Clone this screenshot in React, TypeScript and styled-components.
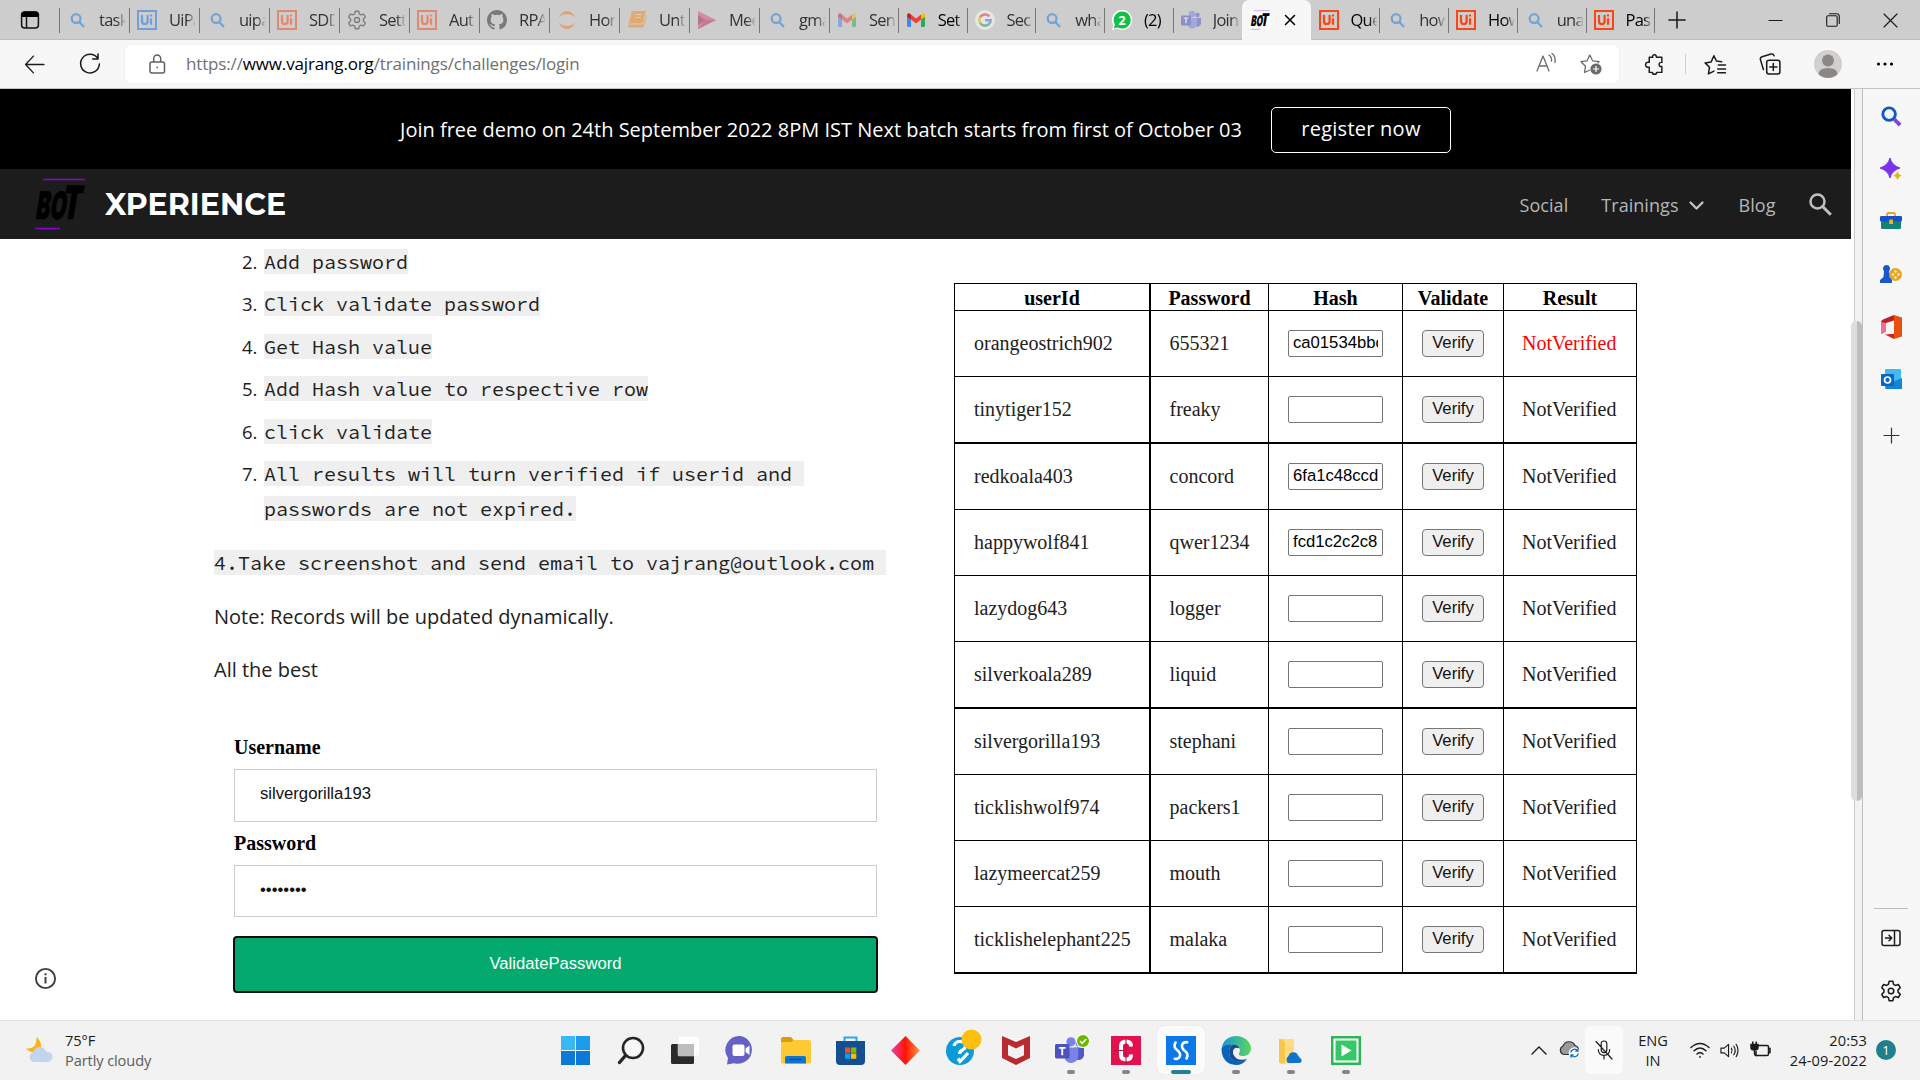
import React from 'react';
import styled, { createGlobalStyle } from 'styled-components';

const ui = "'Segoe UI', 'Open Sans', 'Noto Sans', sans-serif";
const body = "'Open Sans', 'Noto Sans', sans-serif";
const serif = "'Liberation Serif', 'Times New Roman', serif";
const sans = "'Liberation Sans', Arial, sans-serif";

const GlobalStyle = createGlobalStyle`
  *, *::before, *::after { box-sizing: border-box; }
  body { margin: 0; background: #fff; overflow: hidden; }
  svg { display: block; flex: none; overflow: visible; }
  p, ol { margin: 0; padding: 0; }
`;

const Screen = styled.div`
  width: 1920px;
  height: 1080px;
  display: flex;
  flex-direction: column;
  overflow: hidden;
  background: #fff;
`;

/* ---------- tab strip ---------- */

const TabStrip = styled.header`
  height: 40px;
  display: flex;
  background: #cdcdcd;
  box-shadow: inset 0 -1px 0 #bdbdbd;
  font: 400 16.5px/40px ${ui};
`;
const TabActions = styled.div`
  width: 59px;
  display: flex;
  align-items: center;
  padding-left: 20px;
`;
const Tab = styled.div<{ $wide?: boolean; $sep?: boolean }>`
  width: ${p => (p.$wide ? 70 : 68.75)}px;
  height: 40px;
  display: flex;
  align-items: center;
  padding-left: 8px;
  background: ${p =>
    p.$sep ? 'linear-gradient(#777, #777) 0 8px / 1.3px 25px no-repeat' : 'none'};
`;
const TabIcon = styled.span<{ $dim?: boolean }>`
  width: 20px;
  height: 20px;
  flex: none;
  margin-right: 12px;
  opacity: ${p => (p.$dim ? 0.5 : 1)};
`;
const TabTitle = styled.span<{ $dim?: boolean }>`
  width: 26px;
  overflow: hidden;
  white-space: pre;
  letter-spacing: -0.75px;
  color: ${p => (p.$dim ? '#333' : '#000')};
  mask-image: linear-gradient(90deg, #000 68%, transparent 104%);
`;
const ActiveTab = styled.div`
  width: 69px;
  height: 40px;
  display: flex;
  align-items: center;
  gap: 14px;
  padding-left: 8px;
  border-radius: 7px 7px 0 0;
  background: #f7f7f7;
`;
const LastSeparator = styled.span`
  width: 1px;
  height: 25px;
  margin-top: 8px;
  background: #777;
`;
const NewTab = styled.span`
  width: 43px;
  display: flex;
  align-items: center;
  justify-content: center;
`;
const WindowControls = styled.div`
  width: 173px;
  margin-left: auto;
  display: flex;
  > * { width: 57.6px; display: flex; align-items: center; justify-content: center; }
`;

/* ---------- toolbar ---------- */

const Toolbar = styled.div`
  height: 49px;
  display: flex;
  align-items: center;
  padding: 0 0 0 24px;
  background: #f7f7f7;
  border-bottom: 1px solid #c4c4c4;
`;
const NavButton = styled.span<{ $w: number }>`
  width: ${p => p.$w}px;
  display: flex;
  align-items: center;
`;
const AddressBar = styled.div`
  width: 1494px;
  height: 38px;
  display: flex;
  align-items: center;
  padding: 0 17px 0 22px;
  border-radius: 6px;
  background: #fff;
  box-shadow: 0 0 3px #e6e6e6;
`;
const Url = styled.span`
  margin-left: 19px;
  flex: 1;
  font: 400 17px/38px ${ui};
  letter-spacing: -0.15px;
  color: #707070;
  b { font-weight: 400; color: #000; }
`;
const AddressIcons = styled.span`
  display: flex;
  gap: 24px;
`;
const ToolbarIcons = styled.div`
  flex: 1;
  display: grid;
  grid-template-columns: 46px 17px 41px 70px 46px 68px;
  align-items: center;
  justify-items: center;
  padding-left: 12px;
`;
const ToolbarDivider = styled.span`
  width: 1.5px;
  height: 20px;
  background: #ccc;
`;

/* ---------- page ---------- */

const Middle = styled.div`
  height: 931px;
  display: flex;
`;
const Page = styled.main`
  position: relative;
  width: 1851px;
  height: 931px;
  overflow: hidden;
  background: #fff;
`;
const Banner = styled.div`
  height: 80px;
  display: flex;
  justify-content: center;
  align-items: center;
  gap: 29px;
  color: #fff;
  background: #000;
  font: 400 20px/27px ${body};
`;
const RegisterButton = styled.span`
  width: 180px;
  height: 46px;
  margin-top: 1px;
  display: flex;
  align-items: center;
  justify-content: center;
  padding-bottom: 2px;
  border: 1px solid #fff;
  border-radius: 5px;
  letter-spacing: 0.25px;
`;
const SiteHeader = styled.div`
  height: 70px;
  display: flex;
  align-items: center;
  padding: 0 19px 0 34px;
  background: #1c1c1c;
`;
const SiteName = styled.span`
  margin-left: 20px;
  padding-top: 1px;
  flex: 1;
  color: #fff;
  font: 700 30px/40px Montserrat, Inter, sans-serif;
  letter-spacing: 0.05px;
`;
const SiteNav = styled.nav`
  display: flex;
  align-items: center;
  font: 400 18px/25px ${body};
  color: #b6b6b6;
`;
const NavItem = styled.span<{ $gap: number }>`
  display: flex;
  align-items: center;
  gap: 10px;
  margin-right: ${p => p.$gap}px;
  padding-top: 3px;
  letter-spacing: 0.05px;
`;
const Content = styled.div`
  display: flex;
`;
const Instructions = styled.section`
  width: 740px;
  margin-left: 214px;
  padding-top: 6px;
  font: 400 20px/34.9px ${body};
  color: #212121;
`;
const Steps = styled.ol`
  list-style: none;
`;
const Step = styled.li`
  display: flex;
  padding-left: 28px;
  margin-bottom: 7.5px;
`;
const StepNumber = styled.span`
  width: 22px;
  font-size: 18.5px;
`;
const Code = styled.code`
  font: 400 20px 'Source Code Pro', 'Liberation Mono', monospace;
  line-height: 1;
  background: #efefef;
`;
const Paragraph = styled.p<{ $top: number }>`
  margin-top: ${p => p.$top}px;
  white-space: nowrap;
`;
const Form = styled.form`
  width: 645px;
  margin: 48px 0 0 19px;
  display: flex;
  flex-direction: column;
`;
const Label = styled.label<{ $top?: number }>`
  margin: ${p => p.$top || 0}px 0 10px 1px;
  font: 700 20px/23px ${serif};
  color: #000;
`;
const Field = styled.div<{ $h: number }>`
  height: ${p => p.$h}px;
  margin: 0 1px;
  display: flex;
  align-items: center;
  padding: 0 25px 3px;
  border: 1px solid #ccc;
  font: 400 16.67px/20px ${sans};
  color: #111;
`;
const Submit = styled.div`
  height: 57px;
  margin-top: 19px;
  display: flex;
  align-items: center;
  justify-content: center;
  padding-bottom: 1px;
  border: 2px solid #101010;
  border-radius: 4px;
  background: #04aa6d;
  color: #fff;
  font: 400 16.67px/20px ${sans};
`;

/* ---------- credentials table ---------- */

const Table = styled.table`
  width: 683px;
  height: 691px;
  margin-top: 44px;
  table-layout: fixed;
  border-collapse: separate;
  border-spacing: 0;
  border-top: 1px solid #000;
  border-left: 1px solid #000;
  font: 400 20px/23px ${serif};
  color: #212121;
`;
const Col = styled.col<{ $w: number }>`
  width: ${p => p.$w}px;
`;
const HeadCell = styled.th<{ $thick?: boolean }>`
  height: 27px;
  padding: 2px 0 0;
  color: #000;
  border: solid #000;
  border-width: 0 ${p => (p.$thick ? 2 : 1)}px 1px 0;
`;
const Cell = styled.td<{ $thick?: boolean; $bottom?: boolean; $red?: boolean; $pad?: number }>`
  height: ${p => (p.$bottom ? 67 : 66)}px;
  padding: 0 0 0 ${p => p.$pad ?? 19}px;
  border: solid #000;
  border-width: 0 ${p => (p.$thick ? 2 : 1)}px ${p => (p.$bottom ? 2 : 1)}px 0;
  color: ${p => (p.$red ? '#f00' : 'inherit')};
`;
const HashBox = styled.div`
  width: 95px;
  height: 27px;
  padding: 0 4px;
  border: 1px solid #767676;
  border-radius: 2px;
  font: 400 16.67px/24px ${sans};
  color: #000;
  > span { display: block; overflow: hidden; }
`;
const VerifyButton = styled.div`
  width: 62px;
  height: 27px;
  text-align: center;
  border: 1px solid #767676;
  border-radius: 4px;
  background: #efefef;
  font: 400 16.67px/24px ${sans};
  color: #111;
`;
const InfoButton = styled.span`
  position: absolute;
  left: 34px;
  bottom: 30px;
`;

/* ---------- scrollbar and sidebar ---------- */

const Scrollbar = styled.div`
  width: 12px;
  padding-top: 232px;
  background: linear-gradient(90deg, #fff 3px, #ccc 3px, #ccc 4px, #f3f3f3 4px, #f3f3f3 11px, #bdbdbd 11px);
`;
const Thumb = styled.div`
  width: 11px;
  height: 480px;
  border-radius: 5px;
  background: linear-gradient(90deg, #dedede 6px, #bdbdbd 6px);
`;
const Sidebar = styled.aside`
  width: 57px;
  display: flex;
  flex-direction: column;
  align-items: center;
  padding: 1px 1px 0 0;
  background: #f7f7f7;
`;
const SideItem = styled.span<{ $h?: number }>`
  height: ${p => p.$h || 52.6}px;
  display: flex;
  align-items: center;
`;
const SideDivider = styled.span`
  width: 34px;
  height: 1px;
  margin: auto 0 3px;
  background: #bdbdbd;
`;

/* ---------- taskbar ---------- */

const Taskbar = styled.footer`
  height: 60px;
  display: flex;
  background: #f2f2f2;
  border-top: 1px solid #e2e2e2;
  font: 400 14.6px/20px ${ui};
  color: #1a1a1a;
`;
const Weather = styled.div`
  width: 548px;
  display: flex;
  align-items: center;
  gap: 12px;
  padding: 0 0 1px 26px;
`;
const Lines = styled.div<{ $align?: string }>`
  text-align: ${p => p.$align || 'left'};
  letter-spacing: ${p => (p.$align === 'right' ? 0.1 : -0.1)}px;
  white-space: nowrap;
  small { display: block; font-size: inherit; color: #5c5c5c; }
`;
const Apps = styled.div`
  display: flex;
`;
const AppSlot = styled.div`
  width: 55px;
  display: flex;
  justify-content: center;
  padding-top: 5px;
`;
const AppTile = styled.div<{ $active?: boolean }>`
  width: 48px;
  height: 48px;
  display: flex;
  flex-direction: column;
  align-items: center;
  padding-top: 9.5px;
  border-radius: 6px;
  background: ${p => (p.$active ? '#fbfbfb' : 'transparent')};
  box-shadow: ${p => (p.$active ? '0 0 1px #ccc' : 'none')};
`;
const Indicator = styled.span<{ $active?: boolean }>`
  width: ${p => (p.$active ? 20 : 8)}px;
  height: 4px;
  margin-top: 5px;
  border-radius: 2px;
  background: ${p => (p.$active ? '#26808f' : '#868686')};
`;
const Tray = styled.div`
  flex: 1;
  display: flex;
  align-items: center;
  padding: 0 24px 1px 0;
  justify-content: flex-end;
`;
const TrayItem = styled.span<{ $w: number; $end?: boolean }>`
  width: ${p => p.$w}px;
  display: flex;
  justify-content: ${p => (p.$end ? 'flex-end' : 'center')};
`;
const MicTile = styled.span`
  width: 38px;
  height: 48px;
  display: flex;
  align-items: center;
  justify-content: center;
  border-radius: 5px;
  background: #fafafa;
`;
const Badge = styled.span`
  width: 20px;
  height: 20px;
  margin-left: 9px;
  border-radius: 50%;
  background: #1f7f8c;
  color: #fff;
  text-align: center;
  font-size: 13px;
`;

/* ---------- icons ---------- */

type Line = { w?: number; h?: number; box?: string; d: string; color?: string; sw?: number };
const Stroke = ({ w = 20, h = w, box = '0 0 20 20', d, color = '#1b1b1b', sw = 1.5 }: Line) => (
  <svg width={w} height={h} viewBox={box} fill="none" stroke={color} strokeWidth={sw} strokeLinecap="round" strokeLinejoin="round">
    <path d={d} />
  </svg>
);

const gearPath =
  'M8.3 1.2 L11.7 1.2 L12.3 3.9 L14 4.9 L16.7 4.1 L18.4 7 L16.4 9 L16.4 11 L18.4 13 L16.7 15.9 L14 15.1 L12.3 16.1 L11.7 18.8 L8.3 18.8 L7.7 16.1 L6 15.1 L3.3 15.9 L1.6 13 L3.6 11 L3.6 9 L1.6 7 L3.3 4.1 L6 4.9 L7.7 3.9Z M12.5 10a2.5 2.5 0 1 1-5 0a2.5 2.5 0 1 1 5 0';

const UiIcon = ({ color }: { color: string }) => (
  <svg width="20" height="20" viewBox="0 0 20 20">
    <rect x="1" y="1" width="18" height="18" fill="none" stroke={color} strokeWidth="2" />
    <path d="M5 5v6.2a2.8 2.8 0 0 0 5.6 0V5M14 8.3v6.4M14 4.6v1.8" fill="none" stroke={color} strokeWidth="2.2" />
  </svg>
);
const SearchFav = () => <Stroke color="#1a7fdc" sw={2.3} d="M13.5 8.6a4.4 4.4 0 1 1-8.8 0a4.4 4.4 0 1 1 8.8 0M12.3 12l4 4.3" />;
const Gmail = () => (
  <svg width="20" height="20" viewBox="0 0 20 20">
    <path d="M1 5v10.500q0 1.500 1.500 1.500H5V8z" fill="#4285f4" />
    <path d="M19 5v10.500q0 1.500-1.500 1.500H15V8z" fill="#34a853" />
    <path d="M5 4.500l5 4 5-4V9.500l-5 4-5-4z" fill="#ea4335" />
    <path d="M1 5.500Q1 3 3.200 3.200L5 4.500v5L1 6.700z" fill="#c5221f" />
    <path d="M19 5.500Q19 3 16.800 3.200L15 4.500v5l4-2.800z" fill="#fbbc04" />
  </svg>
);
const Teams = ({ size = 20 }: { size?: number }) => (
  <svg width={size} height={size} viewBox="0 0 20 20">
    <circle cx="11" cy="4" r="3.200" fill="#7b83eb" />
    <circle cx="16.500" cy="5" r="2.200" fill="#5059c9" />
    <path d="M14 8h6v5.500a3.500 3.500 0 0 1-6 2z" fill="#5059c9" />
    <path d="M7 8h9v6a4.800 4.800 0 0 1-9 2z" fill="#7b83eb" />
    <rect x="0" y="5.500" width="10" height="10" rx="1" fill="#4b53bc" />
    <path d="M2.700 8.200h4.600M5 8.200v5" stroke="#fff" strokeWidth="1.300" />
  </svg>
);
const BotLetters = () => (
  <g transform="translate(1 40.500) skewX(-9)" fill="#000" stroke="#000" strokeWidth="0.600" fontFamily="Inter, 'Liberation Sans', sans-serif" fontWeight="900">
    <text fontSize="38" textLength="30" lengthAdjust="spacingAndGlyphs">BO</text>
    <text x="26" fontSize="46" textLength="19" lengthAdjust="spacingAndGlyphs">T</text>
  </g>
);

const favicons: Record<string, React.ReactNode> = {
  search: <SearchFav />,
  uiBlue: <UiIcon color="#1a73e8" />,
  ui: <UiIcon color="#fa4616" />,
  gear: <Stroke color="#333" sw={1.400} d={gearPath} />,
  github: (
    <svg width="20" height="20" viewBox="0 0 16 16">
      <path fill="#24292f" d="M8 0C3.580 0 0 3.580 0 8c0 3.540 2.290 6.530 5.470 7.590.4.070.55-.17.55-.38 0-.19-.01-.82-.01-1.490-2.010.37-2.530-.49-2.690-.94-.09-.23-.48-.94-.82-1.130-.28-.15-.68-.52-.01-.53.63-.01 1.080.58 1.230.82.72 1.210 1.870.87 2.330.66.07-.52.28-.87.51-1.070-1.780-.2-3.640-.89-3.640-3.950 0-.87.31-1.590.82-2.150-.08-.2-.36-1.020.08-2.120 0 0 .67-.21 2.200.82a7.600 7.600 0 0 1 4 0c1.530-1.040 2.200-.82 2.200-.82.44 1.100.16 1.920.08 2.120.51.56.82 1.270.82 2.150 0 3.070-1.870 3.750-3.650 3.950.29.25.54.73.54 1.480 0 1.070-.01 1.930-.01 2.200 0 .21.15.46.55.38A8 8 0 0 0 16 8c0-4.420-3.580-8-8-8z" />
    </svg>
  ),
  jupyter: (
    <svg width="20" height="20" viewBox="0 0 20 20" fill="#f37726">
      <path d="M1.500 7q8.500-12 17 0-8.500-6-17 0zM1.500 13q8.500 12 17 0-8.500 6-17 0z" />
    </svg>
  ),
  book: (
    <svg width="20" height="20" viewBox="0 0 20 20" fill="#f08a1c">
      <path d="M5 1h14l-3.500 12.500H1.500zM1 14.500h15L19.500 4l.5 1.500-3.500 12H3q-2 0-2-3z" />
      <path d="M8.500 4.500h6M8 7.500h6" stroke="#f8c58c" strokeWidth="1" />
    </svg>
  ),
  play: (
    <svg width="20" height="20" viewBox="0 0 20 20">
      <path d="M1 1l18 9-18 9z" fill="#e8467c" />
      <path d="M1 5l8 5-8 5z" fill="#9b1f4b" />
      <path d="M1 19l18-9H9z" fill="#b82860" />
    </svg>
  ),
  gmail: <Gmail />,
  google: (
    <svg width="20" height="20" viewBox="0 0 20 20" fill="none" strokeWidth="2.600">
      <circle cx="10" cy="10" r="10" fill="#fff" />
      <path d="M14.200 6.300A5.700 5.700 0 0 0 5.100 7.200" stroke="#ea4335" />
      <path d="M5.100 7.200a5.700 5.700 0 0 0 0 5.600" stroke="#fbbc05" />
      <path d="M5.100 12.800a5.700 5.700 0 0 0 8.700 1.400" stroke="#34a853" />
      <path d="M13.800 14.200a5.700 5.700 0 0 0 1.900-4H10" stroke="#4285f4" />
    </svg>
  ),
  whatsapp: (
    <svg width="20" height="20" viewBox="0 0 20 20">
      <path d="M10 0a10 10 0 1 1-4.600 18.800L0 20l1.300-5A10 10 0 0 1 10 0z" fill="#fff" />
      <path d="M10 1.400a8.600 8.600 0 1 1-4.300 16L1.900 18.200l1-3.800A8.600 8.600 0 0 1 10 1.400z" fill="#10c143" />
      <text x="10" y="14.800" textAnchor="middle" fill="#fff" fontSize="13" fontWeight="700" fontFamily="Open Sans">2</text>
    </svg>
  ),
  teams: <Teams />,
};

type TabInfo = [icon: string, title: string, awake?: boolean];
const leftTabs: TabInfo[] = [
  ['search', 'task'], ['uiBlue', 'UiPa'], ['search', 'uipa'], ['ui', 'SDD'], ['gear', 'Sett'], ['ui', 'Aut'],
  ['github', 'RPA'], ['jupyter', 'Hor'], ['book', 'Unt'], ['play', 'Mee'], ['search', 'gma'], ['gmail', 'Sen'],
  ['gmail', 'Set', true], ['google', 'Sec'], ['search', 'wha'], ['whatsapp', '(2)', true], ['teams', 'Join'],
];
const rightTabs: TabInfo[] = [
  ['ui', 'Que', true], ['search', 'how'], ['ui', 'How', true], ['search', 'una'], ['ui', 'Pas', true],
];

const BrowserTab = ({ tab: [icon, title, awake], wide, sep }: { tab: TabInfo; wide?: boolean; sep?: boolean }) => (
  <Tab $wide={wide} $sep={sep}>
    <TabIcon $dim={!awake}>{favicons[icon]}</TabIcon>
    <TabTitle $dim={!awake}>{title}</TabTitle>
  </Tab>
);

const Tabs = () => (
  <TabStrip>
    <TabActions>
      <svg width="20" height="20" viewBox="0 0 20 20">
        <rect x="1.600" y="2" width="16.800" height="16" rx="3" fill="none" stroke="#111" strokeWidth="1.500" />
        <path d="M1.600 7V4.500q0-3 3-3h10.800q3 0 3 3V7z" fill="#000" />
        <path d="M6.500 6v12" stroke="#111" strokeWidth="1.500" />
      </svg>
    </TabActions>
    {leftTabs.map((t, i) => <BrowserTab key={i} tab={t} wide={i < 11} sep />)}
    <ActiveTab>
      <svg width="20" height="20" viewBox="0 0 51 52">
        <rect width="51" height="52" fill="#fff" />
        <path d="M9 2h42M1 50h25" stroke="#c9a0f5" strokeWidth="3" />
        <BotLetters />
      </svg>
      <Stroke w={12} box="0 0 12 12" sw={1.600} color="#000" d="M1.500 1.500l9 9M10.500 1.500l-9 9" />
    </ActiveTab>
    {rightTabs.map((t, i) => <BrowserTab key={i} tab={t} sep={i > 0} />)}
    <LastSeparator />
    <NewTab><Stroke w={18} d="M10 1v18M1 10h18" sw={1.700} /></NewTab>
    <WindowControls>
      <span><Stroke w={13} d="M0 10h20" sw={1.800} /></span>
      <span><Stroke w={14} d="M1 6q0-2 2-2h11q2 0 2 2v11q0 2-2 2H3q-2 0-2-2zM5 1h10q4 0 4 4v10" sw={1.600} /></span>
      <span><Stroke w={13} d="M0 0l20 20M20 0L0 20" sw={1.800} /></span>
    </WindowControls>
  </TabStrip>
);

const AddressRow = () => (
  <Toolbar>
    <NavButton $w={55}><Stroke w={21} d="M19 10H1.500M9 2L1.500 10 9 18" sw={1.300} /></NavButton>
    <NavButton $w={46}><Stroke w={22} d="M17 4.800A8.500 8.500 0 1 0 18.500 10M17.300 1v4.500h-4.800" sw={1.400} /></NavButton>
    <AddressBar>
      <Stroke w={20} d="M5 8h10.500q2 0 2 2v7q0 2-2 2H5q-2 0-2-2v-7q0-2 2-2zM6.700 8V4.500a3.500 3.500 0 0 1 7 0V8M10.200 13.200v.6" color="#606060" />
      <Url>https://<b>www.vajrang.org</b>/trainings/challenges/login</Url>
      <AddressIcons>
        <Stroke w={20} d="M1 18L7 3l6 15M3 13h8M13 2q3 2 2.500 6M16 .5q4 3 3 9" color="#6b6b6b" sw={1.300} />
        <svg width="22" height="22" viewBox="0 0 22 22">
          <path d="M10 17l-5.500 2.500 1-6.300L1 8.700l6-.9L9.800 2l2.800 5.800 6.400.9-1.500 1.700" fill="none" stroke="#6b6b6b" strokeWidth="1.300" strokeLinejoin="round" />
          <circle cx="16" cy="16" r="5.600" fill="#6b6b6b" />
          <path d="M16 13v6M13 16h6" stroke="#fff" strokeWidth="1.200" />
        </svg>
      </AddressIcons>
    </AddressBar>
    <ToolbarIcons>
      <Stroke w={21} d="M5 3h3.300q-.3-2.200 1.700-2.200T11.700 3H17v5q-2.600-.3-2.600 1.900T17 12v5.500h-5q0 1.800-2 1.800t-2-1.800H5v-5Q1.500 13 1.500 10.200T5 8z" sw={1.400} />
      <ToolbarDivider />
      <Stroke w={22} d="M9 16.500L4 19l1-6-4-4 5.500-.8L9 2.500l2.300 4.800 4.700.7M13 11h6.500M12.500 14.500h7M12.500 18h7" sw={1.400} />
      <Stroke w={22} d="M9.500 6.500H17q2 0 2 2V17q0 2-2 2H9q-2 0-2-2V8.500q0-2 2.500-2M13 9.500v6.500M9.800 12.800h6.500M4 15L1.300 6q-.5-2 1.500-2.600L11 1q2-.4 2.700 1.500" sw={1.400} />
      <svg width="28" height="28" viewBox="0 0 28 28">
        <circle cx="14" cy="14" r="14" fill="#d2d0ce" />
        <circle cx="14" cy="10.500" r="6" fill="#8a8886" />
        <path d="M4.500 24.200Q5 18 14 18t9.500 6.200A14 14 0 0 1 4.500 24.200z" fill="#8a8886" />
      </svg>
      <svg width="18" height="4" viewBox="0 0 18 4"><circle cx="2.500" cy="2" r="1.600" /><circle cx="9" cy="2" r="1.600" /><circle cx="15.500" cy="2" r="1.600" /></svg>
    </ToolbarIcons>
  </Toolbar>
);

const steps: [number, React.ReactNode][] = [
  [2, 'Add password'], [3, 'Click validate password'], [4, 'Get Hash value'],
  [5, 'Add Hash value to respective row'], [6, 'click validate'],
  [7, <>All results will turn verified if userid and&nbsp;<br />passwords are not expired.</>],
];

const rows: [string, string, string][] = [
  ['orangeostrich902', '655321', 'ca01534bbc'], ['tinytiger152', 'freaky', ''], ['redkoala403', 'concord', '6fa1c48ccd'],
  ['happywolf841', 'qwer1234', 'fcd1c2c2c8'], ['lazydog643', 'logger', ''], ['silverkoala289', 'liquid', ''],
  ['silvergorilla193', 'stephani', ''], ['ticklishwolf974', 'packers1', ''], ['lazymeercat259', 'mouth', ''],
  ['ticklishelephant225', 'malaka', ''],
];
const thickRows = [1, 5, 9];

const Credentials = () => (
  <Table>
    <colgroup><Col $w={196} /><Col $w={118} /><Col $w={134} /><Col $w={101} /><Col $w={133} /></colgroup>
    <thead>
      <tr>
        <HeadCell $thick>userId</HeadCell><HeadCell>Password</HeadCell><HeadCell>Hash</HeadCell>
        <HeadCell>Validate</HeadCell><HeadCell>Result</HeadCell>
      </tr>
    </thead>
    <tbody>
      {rows.map(([user, pass, hash], i) => {
        const bottom = thickRows.includes(i);
        return (
          <tr key={user}>
            <Cell $thick $bottom={bottom}>{user}</Cell>
            <Cell $bottom={bottom} $pad={18.5}>{pass}</Cell>
            <Cell $bottom={bottom}><HashBox><span>{hash}</span></HashBox></Cell>
            <Cell $bottom={bottom}><VerifyButton>Verify</VerifyButton></Cell>
            <Cell $bottom={bottom} $pad={18} $red={i === 0}>NotVerified</Cell>
          </tr>
        );
      })}
    </tbody>
  </Table>
);

const SitePage = () => (
  <Page>
    <Banner>
      <span>Join free demo on 24th September 2022 8PM IST Next batch starts from first of October 03</span>
      <RegisterButton>register now</RegisterButton>
    </Banner>
    <SiteHeader>
      <svg width="51" height="52" viewBox="0 0 51 52">
        <path d="M9 1.500h42M1 50.500h25" stroke="#8a00d4" strokeWidth="1.400" />
        <BotLetters />
      </svg>
      <SiteName>XPERIENCE</SiteName>
      <SiteNav>
        <NavItem $gap={33}>Social</NavItem>
        <NavItem $gap={35}>Trainings<Stroke w={15} h={10} box="0 0 15 10" d="M1.500 1.500l6 6 6-6" color="#c4c4c4" sw={2.300} /></NavItem>
        <NavItem $gap={33.5}>Blog</NavItem>
        <svg width="23" height="23" viewBox="0 0 23 23" fill="none" stroke="#c0c0c0">
          <circle cx="8.500" cy="8.500" r="7" strokeWidth="2.500" />
          <path d="M13.800 13.800l8 8" strokeWidth="3" />
        </svg>
      </SiteNav>
    </SiteHeader>
    <Content>
      <Instructions>
        <Steps>
          {steps.map(([n, text]) => (
            <Step key={n}><StepNumber>{n}.</StepNumber><span><Code>{text}</Code></span></Step>
          ))}
        </Steps>
        <Paragraph $top={19.6}><Code>4.Take screenshot and send email to vajrang@outlook.com&nbsp;</Code></Paragraph>
        <Paragraph $top={18.5}>Note: Records will be updated dynamically.</Paragraph>
        <Paragraph $top={18.5}>All the best</Paragraph>
        <Form>
          <Label>Username</Label>
          <Field $h={53}>silvergorilla193</Field>
          <Label $top={10}>Password</Label>
          <Field $h={52}>••••••••</Field>
          <Submit>ValidatePassword</Submit>
        </Form>
      </Instructions>
      <Credentials />
    </Content>
    <InfoButton>
      <svg width="23" height="23" viewBox="0 0 23 23">
        <circle cx="11.500" cy="11.500" r="9.600" fill="none" stroke="#3c4043" strokeWidth="1.900" />
        <path d="M11.500 10v6.500M11.500 6.300v2" stroke="#3c4043" strokeWidth="2" />
      </svg>
    </InfoButton>
  </Page>
);

const EdgeSidebar = () => (
  <Sidebar>
    <SideItem>
      <svg width="21" height="21" viewBox="0 0 22 22" fill="none">
        <path d="M14 14l6 6" stroke="#8a3fe0" strokeWidth="4" />
        <circle cx="8.500" cy="8.500" r="6.600" stroke="#1257c9" strokeWidth="3" />
      </svg>
    </SideItem>
    <SideItem>
      <svg width="22" height="22" viewBox="0 0 22 22">
        <path d="M10 0q1.800 7.500 10 10-8.200 2.500-10 10Q8.200 12.500 0 10 8.200 7.500 10 0z" fill="#7d33ea" stroke="#7d33ea" strokeWidth="1" />
        <path d="M17.500 13q.8 3.800 4.500 4.700-3.700.9-4.500 4.600-.8-3.700-4.500-4.600 3.700-.9 4.500-4.700z" fill="#f0b000" />
      </svg>
    </SideItem>
    <SideItem>
      <svg width="22" height="18" viewBox="0 0 22 18">
        <path d="M7 4V2.500Q7 1 8.500 1h5Q15 1 15 2.500V4" fill="none" stroke="#e5a51a" strokeWidth="1.800" />
        <rect x="1" y="8" width="20" height="9" rx="1.500" fill="#118477" />
        <rect x="0" y="4" width="22" height="5.500" rx="1.200" fill="#1552c8" />
        <rect x="9.300" y="7.500" width="3.600" height="4.500" rx=".6" fill="#f5b91d" />
      </svg>
    </SideItem>
    <SideItem>
      <svg width="22" height="18" viewBox="0 0 22 18">
        <circle cx="15.500" cy="9.500" r="6.500" fill="#e9a425" />
        <g fill="#fff3c8"><circle cx="15.500" cy="6.500" r="1.200" /><circle cx="15.500" cy="12.500" r="1.200" /><circle cx="18.500" cy="9.500" r="1.200" /><circle cx="13" cy="9.500" r="1.200" /></g>
        <path d="M6.500 0a3.600 3.600 0 0 1 2.500 6.200L9.500 12l2.500 3v3H0v-3l3.500-3L4 6.200A3.600 3.600 0 0 1 6.500 0z" fill="#1b58c9" />
      </svg>
    </SideItem>
    <SideItem>
      <svg width="21" height="24" viewBox="0 0 21 24">
        <path d="M13 0l8 2.500v19L13 24z" fill="#e8500f" />
        <path d="M13 0L2 4.500Q0 5.500 0 7v12l5-2.500V8l8-2.500z" fill="#c01f2a" />
        <path d="M0 19V7l5 1v8.500z" fill="#ef6f92" />
        <path d="M4 19.500l9-.7V24z" fill="#d1221f" />
      </svg>
    </SideItem>
    <SideItem>
      <svg width="21" height="21" viewBox="0 0 21 21">
        <rect x="4" y="0" width="16" height="20" rx="1" fill="#41b9f2" />
        <path d="M4 16l17-7v11H5z" fill="#1385d8" />
        <rect x="0" y="5" width="13" height="12" rx="1" fill="#0a66c2" />
        <circle cx="6.500" cy="11" r="3" fill="none" stroke="#fff" strokeWidth="1.700" />
      </svg>
    </SideItem>
    <SideItem $h={59}><Stroke w={15} d="M10 0v20M0 10h20" sw={1.600} color="#333" /></SideItem>
    <SideDivider />
    <SideItem><Stroke w={20} h={18} box="0 0 20 18" d="M3 1.500h14q2 0 2 2v11q0 2-2 2H3q-2 0-2-2v-11q0-2 2-2zM13.500 1.500v15M4.500 9h6M8 6.300L10.700 9 8 11.700" sw={1.500} /></SideItem>
    <SideItem><Stroke w={22} d={gearPath} sw={1.400} /></SideItem>
    <SideItem $h={3} />
  </Sidebar>
);

const apps: { icon: React.ReactNode; state?: 'open' | 'active' }[] = [
  { icon: <svg width="29" height="29" viewBox="0 0 29 29"><path d="M0 0h14v14H0z" fill="#38b8f5" /><path d="M15 0h14v14H15z" fill="#1d9ceb" /><path d="M0 15h14v14H0zM15 15h14v14H15z" fill="#0a7ad6" /></svg> },
  { icon: <svg width="29" height="29" viewBox="0 0 29 29" fill="none" stroke="#262626"><circle cx="17" cy="12" r="10" strokeWidth="2.600" fill="#f8f8f8" /><path d="M9.500 19.500L3.500 26.500" strokeWidth="3.400" strokeLinecap="round" /></svg> },
  { icon: <svg width="29" height="29" viewBox="0 0 29 29"><rect x="0" y="8" width="23" height="20" rx="1.500" fill="#2a2a2a" /><rect x="7" y="0" width="22" height="20" rx="1.500" fill="#fdfdfd" stroke="#e0e0e0" strokeWidth=".5" /><path d="M7 8h16v12H8.500Q7 20 7 18.500z" fill="#bdbdbd" /></svg> },
  { icon: <svg width="29" height="29" viewBox="0 0 29 29"><path d="M14.500 0A14 14 0 1 1 8 27.200L1 28.500 2 22A14 14 0 0 1 14.500 0z" fill="#6661c6" /><rect x="6.500" y="8.500" width="12" height="11.500" rx="2" fill="#fff" /><path d="M19.500 12.500l4-3v9.500l-4-3z" fill="#fff" /></svg> },
  { icon: <svg width="30" height="28" viewBox="0 0 30 28"><path d="M0 3q0-2 2-2h8l3 3.500v5H0z" fill="#dd9a0b" /><path d="M0 6h10l3-2h15q2 0 2 2v20q0 1.500-1.500 1.500h-27Q0 27.500 0 26z" fill="#ffc933" /><path d="M4 27.500V22q0-2 2-2h17q2 0 2 2v5.500z" fill="#0f74ce" /><path d="M8 23.500h13" stroke="#08509a" strokeWidth="1.400" /></svg> },
  { icon: <svg width="29" height="29" viewBox="0 0 29 29"><path d="M8.500 6V1.500h12V6" fill="none" stroke="#25a9ee" strokeWidth="2" /><path d="M0 5h29v20q0 4-4 4H4q-4 0-4-4z" fill="#134f8f" /><path d="M9 11.500h5.300v5.300H9z" fill="#f25022" /><path d="M15 11.500h5.300v5.300H15z" fill="#7fba00" /><path d="M9 17.500h5.300v5.300H9z" fill="#00a4ef" /><path d="M15 17.500h5.300v5.300H15z" fill="#ffb900" /></svg> },
  { icon: <svg width="29" height="29" viewBox="0 0 29 29"><defs><linearGradient id="dia"><stop offset="0" stopColor="#f03cb0" /><stop offset=".5" stopColor="#ff1400" /><stop offset="1" stopColor="#ff9a50" /></linearGradient></defs><path d="M14.500 0L29 14.500 14.500 29 0 14.500z" fill="url(#dia)" /></svg> },
  { icon: <svg width="29" height="29" viewBox="0 0 29 29"><circle cx="14" cy="15" r="14" fill="#0c9bd7" /><path d="M8 10q1-4.500 6-4.500t5.500 4q0 3-3 4.500t-3 4M12 22.500l2 3 8-8.500" fill="none" stroke="#fff" strokeWidth="3.200" /><circle cx="25.500" cy="3.500" r="10" fill="#ffbf0f" /></svg> },
  { icon: <svg width="28" height="29" viewBox="0 0 28 29"><path d="M0 0l14 6 14-6v22L14 29 0 22z" fill="#b92b30" /><path d="M6 8.500l8 4 8-4v10.700L14 23l-8-3.800z" fill="#f2f2f2" /></svg> },
  { icon: <svg width="31" height="29" viewBox="0 0 31 29"><g transform="scale(1.450)"><Teams size={20} /></g><circle cx="28" cy="5" r="7" fill="#fff" /><circle cx="28" cy="5" r="6" fill="#6bb700" /><path d="M25 5l2.200 2.300 4-4.300" fill="none" stroke="#fff" strokeWidth="1.600" /></svg>, state: 'open' },
  { icon: <svg width="30" height="29" viewBox="0 0 30 29"><path d="M0 0h30v29H0z" fill="#e3124f" /><path d="M20 10.500V10q0-4.500-5-4.500t-5 4.500v9q0 4.500 5 4.500t5-4.500v-.5" fill="none" stroke="#fff" strokeWidth="4" /><path d="M15 2v25M3 14.500h9" stroke="#a80d3d" strokeWidth="1" /></svg>, state: 'open' },
  { icon: <svg width="30" height="29" viewBox="0 0 30 29"><path d="M0 0h30v29H0z" fill="#0a78e6" /><g fill="none" stroke="#fff" strokeWidth="2.600" strokeLinecap="round"><path d="M9.500 6.500Q7 11 11 14t2.800 6.500q-1.500 3-5 2.300" /><path d="M20.500 22.500Q23 18 19 15t-2.800-6.500q1.500-3 5-2.300" /></g></svg>, state: 'active' },
  { icon: (
    <svg width="30" height="29" viewBox="0 0 30 29">
      <defs><linearGradient id="edge" x1="0" x2="1"><stop offset="0" stopColor="#1a94e0" /><stop offset="1" stopColor="#5ad65a" /></linearGradient></defs>
      <path d="M.5 13C1.500 5 7.500 0 15 0c8.500 0 15 6 15 12.500 0 5-4 7.500-8 7.500-3.500 0-4.500-1-4-2.500 2-3 1-8.500-5-8.500-6.500 0-11 3-12.500 4z" fill="url(#edge)" />
      <path d="M.5 13Q4 8 11 9q-3 2-3 6.500 0 9 10 10 4 .3 8-2.500Q22 29 15 29 1 28 .5 13z" fill="#0c63b8" />
      <path d="M11 9q6-1 7.500 3.500-4-2-6 1-2 5 3 9 5 2.500 10.500 0Q22 26.500 17 25.500 8 24.500 8 15.500 8 11 11 9z" fill="#154c94" />
    </svg>
  ), state: 'open' },
  { icon: <svg width="24" height="29" viewBox="0 0 24 29"><path d="M0 3h13q2 0 2 2v22.500H2q-2 0-2-2z" fill="#ffdc7d" /><path d="M0 3q4 0 6 3v21.500H2q-2 0-2-2z" fill="#f6c64f" /><path d="M9 27a4.500 4.500 0 0 1 .5-7 5 5 0 0 1 9.500-.5q1.500 1.500 2 2.500a2.700 2.700 0 0 1 0 5z" fill="#1273cf" /></svg>, state: 'open' },
  { icon: <svg width="30" height="29" viewBox="0 0 30 29"><path d="M0 0h30v29H0z" fill="#2cb656" /><path d="M3.500 3.500h23v22h-23z" fill="#35c866" stroke="#fff" strokeWidth="2" /><path d="M10.500 8.500l10 6-10 6z" fill="#fff" /></svg>, state: 'open' },
];

const WindowsTaskbar = () => (
  <Taskbar>
    <Weather>
      <svg width="27" height="26" viewBox="0 0 27 26">
        <path d="M10.500 0Q17.500 6 14 13.500 9 19 0 11.500q7 .5 9.300-4Q10.800 4 10.500 0z" fill="#fbb21c" />
        <path d="M8 25a5 5 0 0 1-.5-9.800A6.500 6.500 0 0 1 20 14.500q6.500.5 6.500 5.300T21 25z" fill="#c3d4ee" />
      </svg>
      <Lines>75°F<small>Partly cloudy</small></Lines>
    </Weather>
    <Apps>
      {apps.map(({ icon, state }, i) => (
        <AppSlot key={i}>
          <AppTile $active={state === 'active'}>
            {icon}
            {state && <Indicator $active={state === 'active'} />}
          </AppTile>
        </AppSlot>
      ))}
    </Apps>
    <Tray>
      <TrayItem $w={30}><Stroke w={16} h={9} box="0 0 16 9" d="M1 8l7-7 7 7" sw={1.400} /></TrayItem>
      <TrayItem $w={31}>
        <svg width="22" height="18" viewBox="0 0 22 18">
          <path d="M5 13.500A4.500 4.500 0 0 1 4 5a6.500 6.500 0 0 1 12-.5A4.500 4.500 0 0 1 19 11l-2 2.500z" fill="#9a9a9a" stroke="#333" strokeWidth="1.200" />
          <circle cx="15.500" cy="12" r="5.800" fill="#fff" />
          <path d="M11.800 11.500a3.800 3.800 0 0 1 7-1.500M19.200 12.500a3.800 3.800 0 0 1-7 1.500M19 7.500v2.700h-2.700M12 16.700V14h2.700" fill="none" stroke="#0c6cd4" strokeWidth="1.300" />
        </svg>
      </TrayItem>
      <MicTile><Stroke w={20} d="M10 1q2.800 0 2.800 2.800v6q0 2.800-2.800 2.800T7.200 9.800v-6Q7.200 1 10 1M4.300 9.500Q4.500 15.300 10 15.300t5.700-5.800M10 15.300V19M2 1.500l16 17.500" sw={1.200} /></MicTile>
      <TrayItem $w={60}><Lines $align="center">ENG<br />IN</Lines></TrayItem>
      <TrayItem $w={33}><Stroke w={20} d="M1 7.500q9-8 18 0M4 10.800q6-5.500 12 0M7 14q3-2.500 6 0M10 16.500v.8" sw={1.500} /></TrayItem>
      <TrayItem $w={26}><Stroke w={19} d="M1 7.500h3.500L9 3.500v13l-4.500-4H1zM12 7.500q1.500 2.500 0 5M14.500 5.500q3 4.500 0 9M17 3.500q4 6.500 0 13" sw={1.200} /></TrayItem>
      <TrayItem $w={36}>
        <svg width="21" height="18" viewBox="0 0 21 18" fill="none" stroke="#1b1b1b" strokeWidth="1.500">
          <path d="M8 4.500h9q1.500 0 1.500 1.500v7q0 1.500-1.500 1.500H6V10" />
          <path d="M18.500 7.500h1.500v4h-1.500" />
          <path d="M1 3.500h7v3Q8 9 4.500 9T1 6.500z" fill="#1b1b1b" />
          <path d="M2.800.5v3M6.200.5v3M4.500 9v3.500q0 2 2 2" />
        </svg>
      </TrayItem>
      <TrayItem $w={89} $end><Lines $align="right">20:53<br />24-09-2022</Lines></TrayItem>
      <Badge>1</Badge>
    </Tray>
  </Taskbar>
);

export default function App() {
  return (
    <Screen>
      <GlobalStyle />
      <Tabs />
      <AddressRow />
      <Middle>
        <SitePage />
        <Scrollbar><Thumb /></Scrollbar>
        <EdgeSidebar />
      </Middle>
      <WindowsTaskbar />
    </Screen>
  );
}
